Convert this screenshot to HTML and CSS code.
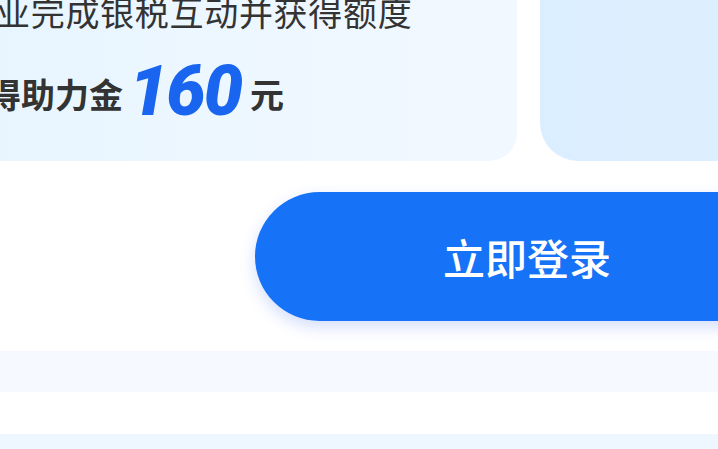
FILE: index.html
```html
<!DOCTYPE html>
<html lang="zh">
<head>
<meta charset="utf-8">
<link rel="stylesheet" href="styles.css">
</head>
<body>
<div class="page">
  <div class="cards">
    <div class="card card-main">
      <div class="line1">业完成银税互动并获得额度</div>
      <div class="line2">
        <span class="label">得助力金</span>
        <span class="amount">160</span>
        <span class="unit">元</span>
      </div>
    </div>
    <div class="card card-side"></div>
  </div>
  <div class="action">
    <button class="login">立即登录</button>
  </div>
  <div class="band band-a"></div>
  <div class="spacer"></div>
  <div class="band band-b"></div>
</div>
</body>
</html>
```
FILE: styles.css
```css
html, body {
  margin: 0;
  padding: 0;
  background: #ffffff;
  overflow: hidden;
  width: 718px;
  height: 449px;
}
.page {
  font-family: "Noto Sans CJK SC", "Noto Sans", sans-serif;
  color: #333333;
  width: 718px;
}
.cards {
  display: flex;
  gap: 23px;
  margin-left: -40px;
  margin-top: -40px;
}
.card {
  height: 201px;
  flex: none;
}
.card-main {
  width: 557px;
  border-radius: 0 0 28px 0;
  background: linear-gradient(90deg, #e7f5ff 0%, #edf7ff 50%, #f2f8ff 100%);
  padding-top: 35px;
  padding-left: 36px;
  box-sizing: border-box;
}
.card-side {
  width: 260px;
  border-radius: 0 0 0 38px;
  background: linear-gradient(90deg, #dbeeff 0%, #ddefff 70%, #e3f2ff 100%);
}
.line1 {
  font-size: 34px;
  line-height: 34px;
  white-space: nowrap;
  color: #333;
  letter-spacing: 0.7px;
}
.line2 {
  display: flex;
  align-items: center;
  margin-top: 29px;
  margin-left: -9px;
  white-space: nowrap;
}
.label, .unit {
  font-size: 34px;
  font-weight: 700;
  line-height: 34px;
  color: #333;
}
.unit {
  margin-left: 9px;
  position: relative;
  top: 3px;
}
.label {
  position: relative;
  top: 3px;
}
.amount {
  font-family: "Roboto", "Liberation Sans", sans-serif;
  font-size: 70px;
  font-weight: 900;
  font-style: italic;
  line-height: 66px;
  color: #1a65ef;
  margin-left: 6px;
  letter-spacing: -2px;
}
.action {
  display: flex;
  justify-content: flex-end;
  margin-top: 31px;
  margin-right: -81px;
}
.login {
  width: 544px;
  height: 129px;
  border: none;
  border-radius: 65px;
  background: #1672f6;
  color: #ffffff;
  font-family: "Noto Sans CJK SC", "Noto Sans", sans-serif;
  font-size: 42px;
  font-weight: 500;
  letter-spacing: 0;
  padding: 0;
  box-shadow: 0 6px 16px rgba(40, 90, 240, 0.2);
}
.band {
  width: 718px;
}
.band-a {
  margin-top: 30px;
  height: 41px;
  background: #f6f9ff;
}
.spacer {
  height: 42px;
}
.band-b {
  height: 20px;
  background: #eef7ff;
}
```
